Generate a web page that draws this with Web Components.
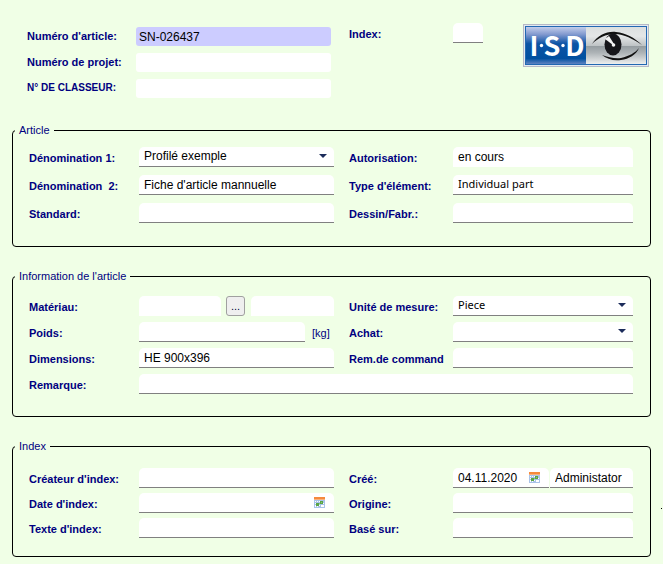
<!DOCTYPE html>
<html lang="fr">
<head>
    <meta charset="UTF-8">
    <meta name="viewport" content="width=device-width, initial-scale=1.0">
    <title>Fiche d'article</title>
    <style>
        body {
            margin: 0;
            background-color: #f0ffe6;
            color: #000080;
            font-family: "Liberation Sans", Arial, sans-serif;
            font-size: 11px;
        }
    </style>
</head>
<body>
    <article-form></article-form>

    <script>
        const boxStyle = `
            .box {
                display: grid;
                grid-template-columns: minmax(0, 1fr) auto;
                align-items: center;
                flex: 1;
                min-width: 0;
                height: 20px;
                box-sizing: border-box;
                background-color: white;
                border-bottom: 1px solid #808080;
                border-radius: 5px 5px 0 0;
            }

            :host([plain]) .box {
                border-bottom: none;
            }

            input, select {
                appearance: none;
                width: 100%;
                height: 19px;
                box-sizing: border-box;
                margin: 0;
                padding: 0 0 0 5px;
                border: none;
                outline: none;
                background: transparent;
                color: black;
                font-family: inherit;
                font-size: 12px;
            }

            select {
                grid-area: 1 / 1 / 2 / 3;
                padding-bottom: 1px;
            }

            :host([face="ui"]) .box {
                font-family: "Noto Sans", "Open Sans", sans-serif;
            }

            :host([face="ui"]) input, :host([face="ui"]) select {
                padding-bottom: 2px;
                font-size: 11px;
            }
        `

        class calendarButton extends HTMLElement {
            constructor(){
                super()
                this.shadowDOM = this.attachShadow({mode : 'open'})
            }

            connectedCallback(){
                this.shadowDOM.innerHTML = `
                <style>
                    :host {
                        display: block;
                        margin-right: 9px;
                    }

                    button {
                        display: block;
                        padding: 0;
                        border: none;
                        background: none;
                    }

                    svg {
                        display: block;
                    }
                </style>
                <button type="button" aria-label="Calendrier">
                    <svg width="11" height="11" viewBox="0 0 11 11" shape-rendering="crispEdges">
                        <rect width="11" height="11" fill="#a9c3e8"/>
                        <rect width="11" height="3" fill="#f58a3c"/>
                        <rect y="2" width="11" height="1" fill="#f9b27c"/>
                        <path fill="#fff" d="M1 4h1v1H1zM3 4h1v1H3zM5 4h1v1H5zM1 6h1v1H1zM3 6h1v1H3zM1 8h1v1H1zM5 8h1v1H5zM9 6h1v1H9zM1 9h1v1H1zM3 9h1v1H3zM7 8h3v2H7z"/>
                        <path fill="#5aa545" d="M6 4h3v3H6zM2 6h3v3H2z"/>
                        <path fill="#8cc47a" d="M5 6h1v1H5zM7 5h1v1H7z"/>
                    </svg>
                </button>
                `
            }
        }

        // Single box without a visible label, used beside a labelled field
        class textBox extends HTMLElement {
            constructor(){
                super()
                this.shadowDOM = this.attachShadow({mode : 'open'})
            }

            connectedCallback(){
                this.shadowDOM.innerHTML = `
                <style>
                    :host {
                        display: flex;
                        flex: 0 0 83px;
                    }
                    ${boxStyle}
                </style>
                <div class="box">
                    <input type="text" aria-label="${this.getAttribute('name')}" value="${this.getAttribute('value') || ''}">
                </div>
                `
            }
        }

        class formField extends HTMLElement {
            constructor(){
                super()
                this.shadowDOM = this.attachShadow({mode : 'open'})
            }

            connectedCallback(){
                this.render()
            }

            get control(){
                const value = this.getAttribute('value') || ''
                if (this.getAttribute('type') === 'select') {
                    return `
                    <select id="control"><option>${value}</option></select>
                    <svg class="arrow" width="8" height="4" viewBox="0 0 8 4"><path fill="#1c2c5b" d="M0 0h8L4 4z"/></svg>
                    `
                }
                const calendar = this.getAttribute('type') === 'date' ? '<calendar-button></calendar-button>' : ''
                return `<input id="control" type="text" value="${value}">${calendar}`
            }

            render(){
                this.shadowDOM.innerHTML = `
                <style>
                    /* label and controls take two cells of the parent grid */
                    :host {
                        display: contents;
                    }
                    ${boxStyle}

                    label {
                        padding-top: 2px;
                        line-height: 18px;
                        font-weight: bold;
                        white-space: pre;
                    }

                    :host([side="right"]) label {
                        margin-left: 15px;
                    }

                    :host([size="small"]) label {
                        font-size: 10px;
                    }

                    .controls {
                        display: flex;
                        min-width: 0;
                    }

                    :host([wide]) .controls {
                        grid-column: span 3;
                    }

                    .arrow {
                        grid-area: 1 / 2;
                        margin-right: 7px;
                        margin-bottom: 1px;
                        pointer-events: none;
                    }

                    :host([header]) label {
                        padding: 0;
                    }

                    :host([header]) .box {
                        height: 19px;
                        border: none;
                        border-radius: 3px;
                    }

                    :host([header]) input {
                        padding-left: 3px;
                    }

                    :host([active]) .box {
                        background-color: #ccccff;
                    }
                </style>
                <label for="control">${this.getAttribute('label')}</label>
                <div class="controls">
                    <div class="box">${this.control}</div>
                    <slot></slot>
                </div>
                `
            }
        }

        class formPanel extends HTMLElement {
            constructor(){
                super()
                this.shadowDOM = this.attachShadow({mode : 'open'})
            }

            connectedCallback(){
                this.shadowDOM.innerHTML = `
                <style>
                    :host {
                        display: block;
                    }

                    fieldset {
                        min-width: 0;
                        margin: 0;
                        padding: 0 2px;
                        border: 1px solid black;
                        border-radius: 4px;
                    }

                    legend {
                        padding: 0 4px;
                        line-height: 13px;
                    }

                    .rows {
                        display: grid;
                        grid-template-columns: 110px minmax(0, 195fr) 119px minmax(0, 180fr);
                        row-gap: var(--row-gap, 8px);
                        padding: var(--rows-padding, 10px 15px 23px 14px);
                    }
                </style>
                <fieldset>
                    <legend>${this.getAttribute('legend')}</legend>
                    <div class="rows"><slot></slot></div>
                </fieldset>
                `
            }
        }

        class isdLogo extends HTMLElement {
            constructor(){
                super()
                this.shadowDOM = this.attachShadow({mode : 'open'})
            }

            connectedCallback(){
                this.shadowDOM.innerHTML = `
                <style>
                    :host {
                        display: block;
                    }

                    svg {
                        display: block;
                    }

                    text {
                        font-family: "Noto Sans CJK SC", "Liberation Sans", sans-serif;
                        font-weight: bold;
                        font-size: 27px;
                        fill: white;
                        text-anchor: middle;
                    }
                </style>
                <svg width="126" height="43" viewBox="0 0 126 43" role="img" aria-label="ISD">
                    <defs>
                        <linearGradient id="blue" x1="0" y1="0" x2="0" y2="1">
                            <stop offset="0" stop-color="#c3cdea"/>
                            <stop offset=".2" stop-color="#8299cf"/>
                            <stop offset=".45" stop-color="#0d54a5"/>
                            <stop offset=".85" stop-color="#0050a0"/>
                            <stop offset="1" stop-color="#5f82c0"/>
                        </linearGradient>
                        <linearGradient id="steel" x1="0" y1="0" x2="0" y2="1">
                            <stop offset="0" stop-color="#dcdfe0"/>
                            <stop offset=".25" stop-color="#e4e6e7"/>
                            <stop offset=".5" stop-color="#bfc4c6"/>
                            <stop offset=".52" stop-color="#959da1"/>
                            <stop offset=".7" stop-color="#aeb4b7"/>
                            <stop offset="1" stop-color="#eceeee"/>
                        </linearGradient>
                    </defs>
                    <rect width="126" height="43" fill="#b5b9c6"/>
                    <rect x="1" y="1" width="124" height="41" fill="#e4e9f0"/>
                    <rect x="2" y="2" width="122" height="39" fill="#2268b2"/>
                    <rect x="3" y="3" width="60" height="37" fill="url(#blue)"/>
                    <rect x="63" y="3" width="60" height="37" fill="url(#steel)"/>
                    <text y="32"><tspan x="11">I</tspan><tspan x="29">S</tspan><tspan x="52">D</tspan></text>
                    <circle cx="18.500" cy="21.500" r="1.700" fill="#fff"/>
                    <circle cx="40" cy="21.500" r="1.700" fill="#fff"/>
                    <path fill="#111" d="M69 20C75 11 84 7 93 8c10 1 19 6 26 13C110 15 101 10 92 10c-9 0-17 4-23 10z"/>
                    <path fill="#111" d="M79 31c6 2 13 4 19 3 8-2 14-5 18-10-3 7-10 11-18 12-8 1-14-1-19-5z"/>
                    <ellipse cx="90" cy="20.500" rx="8.500" ry="11" fill="#16161a"/>
                    <path fill="#f4f4f4" d="M82 15l4-3 5 8-1 1z"/>
                    <circle cx="90.500" cy="21" r="1.800" fill="#f4f4f4"/>
                </svg>
                `
            }
        }

        class formHeader extends HTMLElement {
            constructor(){
                super()
                this.shadowDOM = this.attachShadow({mode : 'open'})
            }

            connectedCallback(){
                this.shadowDOM.innerHTML = `
                <style>
                    :host {
                        display: grid;
                        grid-template-columns: minmax(0, 304fr) 122px minmax(30px, 70fr) 126px;
                        align-items: start;
                        padding: 23px 14px 0 27px;
                    }

                    .numbers {
                        display: grid;
                        grid-template-columns: 109px minmax(0, 1fr);
                        row-gap: 7px;
                        padding-top: 4px;
                    }

                    label {
                        padding-left: 18px;
                        line-height: 22px;
                        font-weight: bold;
                    }

                    .index {
                        width: 30px;
                    }

                    isd-logo {
                        padding-top: 1px;
                    }
                    ${boxStyle}
                </style>
                <div class="numbers">
                    <form-field header active label="Numéro d'article:" value="SN-026437"></form-field>
                    <form-field header label="Numéro de projet:"></form-field>
                    <form-field header size="small" label="N° DE CLASSEUR:"></form-field>
                </div>
                <label for="index">Index:</label>
                <div class="box index"><input id="index" type="text"></div>
                <isd-logo></isd-logo>
                `
            }
        }

        class articleForm extends HTMLElement {
            constructor(){
                super()
                this.shadowDOM = this.attachShadow({mode : 'open'})
            }

            connectedCallback(){
                this.shadowDOM.innerHTML = `
                <style>
                    :host {
                        display: block;
                    }

                    .panels {
                        display: flex;
                        flex-direction: column;
                        gap: 23px;
                        position: relative;
                        padding: 26px 12px 7px;
                    }

                    .information {
                        --row-gap: 6px;
                        --rows-padding: 13px 15px 22px 14px;
                    }

                    .history {
                        --row-gap: 5px;
                        --rows-padding: 15px 15px 18px 14px;
                    }

                    .browse {
                        flex: none;
                        width: 19px;
                        height: 20px;
                        margin: 0 6px 0 5px;
                        padding: 0;
                        border: 1px solid #a0a0a0;
                        border-radius: 3px;
                        background-color: #efefef;
                        color: #000040;
                        font: inherit;
                    }

                    .unit {
                        width: 22px;
                        padding: 2px 0 0 7px;
                        line-height: 18px;
                    }

                    .user {
                        margin-left: 1px;
                    }

                    .mark {
                        position: absolute;
                        right: 1px;
                        bottom: 55px;
                        width: 1px;
                        height: 1px;
                        background-color: black;
                    }
                </style>
                <form-header></form-header>
                <div class="panels">
                    <form-panel legend="Article">
                        <form-field type="select" label="Dénomination 1:" value="Profilé exemple"></form-field>
                        <form-field side="right" plain label="Autorisation:" value="en cours"></form-field>
                        <form-field label="Dénomination  2:" value="Fiche d'article mannuelle"></form-field>
                        <form-field side="right" face="ui" label="Type d'élément:" value="Individual part"></form-field>
                        <form-field label="Standard:"></form-field>
                        <form-field side="right" label="Dessin/Fabr.:"></form-field>
                    </form-panel>
                    <form-panel class="information" legend="Information de l'article">
                        <form-field plain label="Matériau:">
                            <button class="browse" type="button">...</button>
                            <text-box plain name="Désignation du matériau"></text-box>
                        </form-field>
                        <form-field side="right" type="select" face="ui" label="Unité de mesure:" value="Piece"></form-field>
                        <form-field label="Poids:"><span class="unit">[kg]</span></form-field>
                        <form-field side="right" type="select" label="Achat:"></form-field>
                        <form-field label="Dimensions:" value="HE 900x396"></form-field>
                        <form-field side="right" label="Rem.de command"></form-field>
                        <form-field wide label="Remarque:"></form-field>
                    </form-panel>
                    <form-panel class="history" legend="Index">
                        <form-field label="Créateur d'index:"></form-field>
                        <form-field side="right" type="date" label="Créé:" value="04.11.2020">
                            <text-box class="user" name="Créé par" value="Administator"></text-box>
                        </form-field>
                        <form-field type="date" label="Date d'index:"></form-field>
                        <form-field side="right" label="Origine:"></form-field>
                        <form-field label="Texte d'index:"></form-field>
                        <form-field side="right" label="Basé sur:"></form-field>
                    </form-panel>
                    <span class="mark"></span>
                </div>
                `
            }
        }

        customElements.define('calendar-button', calendarButton)
        customElements.define('text-box', textBox)
        customElements.define('form-field', formField)
        customElements.define('form-panel', formPanel)
        customElements.define('isd-logo', isdLogo)
        customElements.define('form-header', formHeader)
        customElements.define('article-form', articleForm)
    </script>
</body>
</html>
